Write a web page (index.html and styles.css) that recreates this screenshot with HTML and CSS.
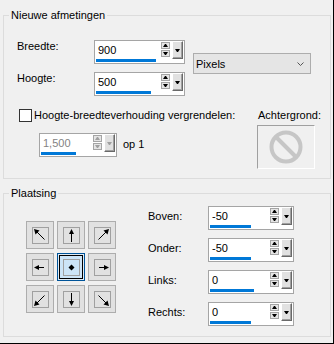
FILE: index.html
```html
<!DOCTYPE html>
<html lang="nl">

<head>
    <meta charset="UTF-8">
    <meta name="viewport" content="width=device-width, initial-scale=1.0">
    <title>Canvasgrootte</title>
    <link rel="stylesheet" href="styles.css">
</head>

<body>
    <div class="dialog">
        <fieldset class="group group-size">
            <legend>Nieuwe afmetingen</legend>
            <div class="size-body">
                <div class="size-top">
                    <div class="dims">
                        <div class="field-row">
                            <span class="field-label">Breedte:</span>
                            <div class="spin spin-wide">
                                <div class="spin-field"><span class="spin-value">900</span><span class="spin-bar" style="width: 60px"></span></div>
                                <div class="spin-arrows"><span class="spin-up"></span><span class="spin-down"></span></div>
                                <span class="spin-drop"></span>
                            </div>
                        </div>
                        <div class="field-row">
                            <span class="field-label">Hoogte:</span>
                            <div class="spin spin-wide">
                                <div class="spin-field"><span class="spin-value">500</span><span class="spin-bar" style="width: 55px"></span></div>
                                <div class="spin-arrows"><span class="spin-up"></span><span class="spin-down"></span></div>
                                <span class="spin-drop"></span>
                            </div>
                        </div>
                    </div>
                    <div class="select">
                        <span>Pixels</span>
                        <svg width="7" height="4" viewBox="0 0 7 4"><polyline points="0.5,0.5 3.5,3.5 6.5,0.5" fill="none" stroke="#555" stroke-width="1" /></svg>
                    </div>
                </div>

                <div class="size-bottom">
                    <div class="lock">
                        <div class="check-row"><span class="checkbox"></span><span>Hoogte-breedteverhouding vergrendelen:</span></div>
                        <div class="ratio-row">
                            <div class="spin spin-ratio is-disabled">
                                <div class="spin-field"><span class="spin-value">1,500</span><span class="spin-bar" style="width: 35px"></span></div>
                                <div class="spin-arrows"><span class="spin-up"></span><span class="spin-down"></span></div>
                                <span class="spin-drop"></span>
                            </div>
                            <span class="ratio-text">op 1</span>
                        </div>
                    </div>
                    <div class="background">
                        <div class="background-label">Achtergrond:</div>
                        <div class="swatch">
                            <svg width="34" height="34" viewBox="0 0 34 34">
                                <circle cx="17" cy="17" r="14.5" fill="none" stroke="#c6c6c6" stroke-width="4" />
                                <line x1="7" y1="7" x2="27" y2="27" stroke="#c6c6c6" stroke-width="4" />
                            </svg>
                        </div>
                    </div>
                </div>
            </div>
        </fieldset>

        <fieldset class="group group-place">
            <legend>Plaatsing</legend>
            <div class="place-body">
                <div class="anchor-grid">
                    <div class="pos"><span class="pos-icon"><svg viewBox="0 0 15 15"><line x1="2" y1="2" x2="11.5" y2="11.5" /><polygon points="1,1 6.5,2.5 2.5,6.5" /></svg></span></div>
                    <div class="pos"><span class="pos-icon"><svg viewBox="0 0 15 15"><line x1="7.5" y1="3" x2="7.5" y2="14" /><polygon points="7.5,1 5,6 10,6" /></svg></span></div>
                    <div class="pos"><span class="pos-icon"><svg viewBox="0 0 15 15"><line x1="13" y1="2" x2="3.5" y2="11.5" /><polygon points="14,1 8.5,2.5 12.5,6.5" /></svg></span></div>
                    <div class="pos"><span class="pos-icon"><svg viewBox="0 0 15 15"><line x1="3" y1="7.5" x2="11" y2="7.5" /><polygon points="1,7.5 6,5 6,10" /></svg></span></div>
                    <div class="pos is-active"><span class="pos-icon"><svg viewBox="0 0 15 15"><polygon points="7.5,4.5 10.5,7.5 7.5,10.5 4.5,7.5" /></svg></span></div>
                    <div class="pos"><span class="pos-icon"><svg viewBox="0 0 15 15"><line x1="4" y1="7.5" x2="12" y2="7.5" /><polygon points="14,7.5 9,5 9,10" /></svg></span></div>
                    <div class="pos"><span class="pos-icon"><svg viewBox="0 0 15 15"><line x1="2" y1="13" x2="11.5" y2="3.5" /><polygon points="1,14 2.5,8.5 6.5,12.5" /></svg></span></div>
                    <div class="pos"><span class="pos-icon"><svg viewBox="0 0 15 15"><line x1="7.5" y1="1" x2="7.5" y2="12" /><polygon points="7.5,14 5,9 10,9" /></svg></span></div>
                    <div class="pos"><span class="pos-icon"><svg viewBox="0 0 15 15"><line x1="13" y1="13" x2="3.5" y2="3.5" /><polygon points="14,14 12.5,8.5 8.5,12.5" /></svg></span></div>
                </div>

                <div class="offsets">
                    <div class="field-row">
                        <span class="field-label place-label">Boven:</span>
                        <div class="spin spin-place">
                            <div class="spin-field"><span class="spin-value">-50</span><span class="spin-bar" style="width: 41px"></span></div>
                            <div class="spin-arrows"><span class="spin-up"></span><span class="spin-down"></span></div>
                            <span class="spin-drop"></span>
                        </div>
                    </div>
                    <div class="field-row">
                        <span class="field-label place-label">Onder:</span>
                        <div class="spin spin-place">
                            <div class="spin-field"><span class="spin-value">-50</span><span class="spin-bar" style="width: 41px"></span></div>
                            <div class="spin-arrows"><span class="spin-up"></span><span class="spin-down"></span></div>
                            <span class="spin-drop"></span>
                        </div>
                    </div>
                    <div class="field-row">
                        <span class="field-label place-label">Links:</span>
                        <div class="spin spin-place">
                            <div class="spin-field"><span class="spin-value">0</span><span class="spin-bar" style="width: 44px"></span></div>
                            <div class="spin-arrows"><span class="spin-up"></span><span class="spin-down"></span></div>
                            <span class="spin-drop"></span>
                        </div>
                    </div>
                    <div class="field-row">
                        <span class="field-label place-label">Rechts:</span>
                        <div class="spin spin-place">
                            <div class="spin-field"><span class="spin-value">0</span><span class="spin-bar" style="width: 41px"></span></div>
                            <div class="spin-arrows"><span class="spin-up"></span><span class="spin-down"></span></div>
                            <span class="spin-drop"></span>
                        </div>
                    </div>
                </div>
            </div>
        </fieldset>
    </div>
</body>

</html>
```

FILE: styles.css
```css
body {
    margin: 0;
    padding: 0;
    background-color: #f0f0f0;
    font-family: 'Liberation Sans', Arial, sans-serif;
    font-size: 11px;
    color: #000;
}

.dialog {
    box-sizing: border-box;
    width: 334px;
    height: 344px;
    padding: 9px 2px 0 3px;
    border-right: 1px solid #000;
    border-bottom: 1px solid #000;
    background-color: #f0f0f0;
}

/* group boxes */

.group {
    margin: 0;
    padding: 0;
    min-width: 0;
    border: 1px solid #dcdcdc;
}

.group legend {
    margin-left: 5px;
    padding: 0 2px;
    line-height: 13px;
}

.group-place {
    margin-top: 8px;
}

.size-body {
    padding: 18px 9px 9px 13px;
}

.place-body {
    display: flex;
    align-items: flex-start;
    padding: 6px 9px 10px 22px;
}

/* label + spin rows */

.field-row {
    display: flex;
    align-items: flex-start;
}

.field-row + .field-row {
    margin-top: 8px;
}

.field-label {
    width: 77px;
    line-height: 13px;
}

.place-label {
    width: 60px;
    padding-top: 4px;
}

/* spin control */

.spin {
    box-sizing: border-box;
    display: flex;
    align-items: flex-start;
    height: 24px;
    border: 1px solid #a5a5a5;
    background: #fff;
}

.spin-wide {
    width: 91px;
}

.spin-ratio {
    width: 78px;
}

.spin-place {
    width: 86px;
}

.spin-field {
    flex: 1;
    display: flex;
    flex-direction: column;
    align-items: flex-start;
    padding-top: 3px;
}

.spin-value {
    padding-left: 3px;
    line-height: 13px;
}

.spin-bar {
    height: 3px;
    margin: 2px 0 0 1px;
    background: #0078d7;
}

.spin-arrows {
    display: flex;
    flex-direction: column;
    gap: 1px;
    margin: 1px 2px 0 0;
}

.spin-arrows span {
    box-sizing: border-box;
    display: flex;
    justify-content: center;
    align-items: center;
    width: 9px;
    height: 7px;
    border: 1px solid #a5a5a5;
    background: #e5e5e5;
}

.spin-up::before,
.spin-down::before,
.spin-drop::before {
    content: '';
    width: 1px;
    height: 0;
    border-left: 2px solid transparent;
    border-right: 2px solid transparent;
}

.spin-up::before {
    border-bottom: 3px solid #000;
}

.spin-down::before,
.spin-drop::before {
    border-top: 3px solid #000;
}

.spin-drop {
    box-sizing: border-box;
    display: flex;
    justify-content: center;
    align-items: center;
    width: 11px;
    height: 18px;
    margin-right: 1px;
    border: 1px solid;
    border-color: #fff #696969 #696969 #fff;
    box-shadow: inset -1px -1px 0 #a0a0a0;
    background: #e1e1e1;
}

.is-disabled .spin-value {
    color: #838383;
}

.is-disabled .spin-up::before {
    border-bottom-color: #a0a0a0;
}

.is-disabled .spin-down::before,
.is-disabled .spin-drop::before {
    border-top-color: #a0a0a0;
}

/* new size */

.size-top {
    display: flex;
    align-items: flex-start;
}

.select {
    box-sizing: border-box;
    display: flex;
    justify-content: space-between;
    align-items: center;
    width: 118px;
    height: 21px;
    margin: 13px 0 0 8px;
    padding: 0 6px 0 2px;
    border: 1px solid #adadad;
    background: #e5e5e5;
}

.select svg {
    display: block;
}

.size-bottom {
    display: flex;
    align-items: flex-start;
    margin-top: 11px;
}

.lock {
    width: 246px;
}

.check-row {
    display: flex;
    align-items: center;
    line-height: 17px;
}

.checkbox {
    box-sizing: border-box;
    width: 13px;
    height: 13px;
    margin: 0 2px 0 2px;
    border: 1px solid #333;
    background: #fff;
}

.ratio-row {
    display: flex;
    align-items: flex-start;
    margin: 9px 0 0 22px;
}

.ratio-text {
    margin-left: 6px;
    padding-top: 5px;
    line-height: 13px;
}

.background-label {
    padding-left: 1px;
    line-height: 17px;
}

.swatch {
    box-sizing: border-box;
    display: flex;
    justify-content: center;
    align-items: center;
    width: 58px;
    height: 44px;
    margin-top: 1px;
    border: 1px solid;
    border-color: #a0a0a0 #fff #fff #a0a0a0;
}

.swatch svg {
    display: block;
}

/* placement */

.anchor-grid {
    display: grid;
    grid-template-columns: repeat(3, 28px);
    grid-template-rows: repeat(3, 28px);
    column-gap: 3px;
    row-gap: 4px;
    margin-top: 15px;
}

.pos {
    box-sizing: border-box;
    display: flex;
    justify-content: center;
    align-items: center;
    border: 1px solid #adadad;
    background: #e1e1e1;
}

.pos.is-active {
    border-color: #005499;
    background: #cce4f7;
    box-shadow: inset 0 0 0 1px #dfeaf4, inset 0 0 0 2px #000;
}

.pos-icon {
    box-sizing: border-box;
    width: 17px;
    height: 17px;
    border: 1px solid #a0a0a0;
}

.pos-icon svg {
    display: block;
    width: 15px;
    height: 15px;
}

.pos-icon line {
    stroke: #000;
    stroke-width: 1;
}

.pos-icon polygon {
    fill: #000;
}

.offsets {
    margin-left: 32px;
}
```
